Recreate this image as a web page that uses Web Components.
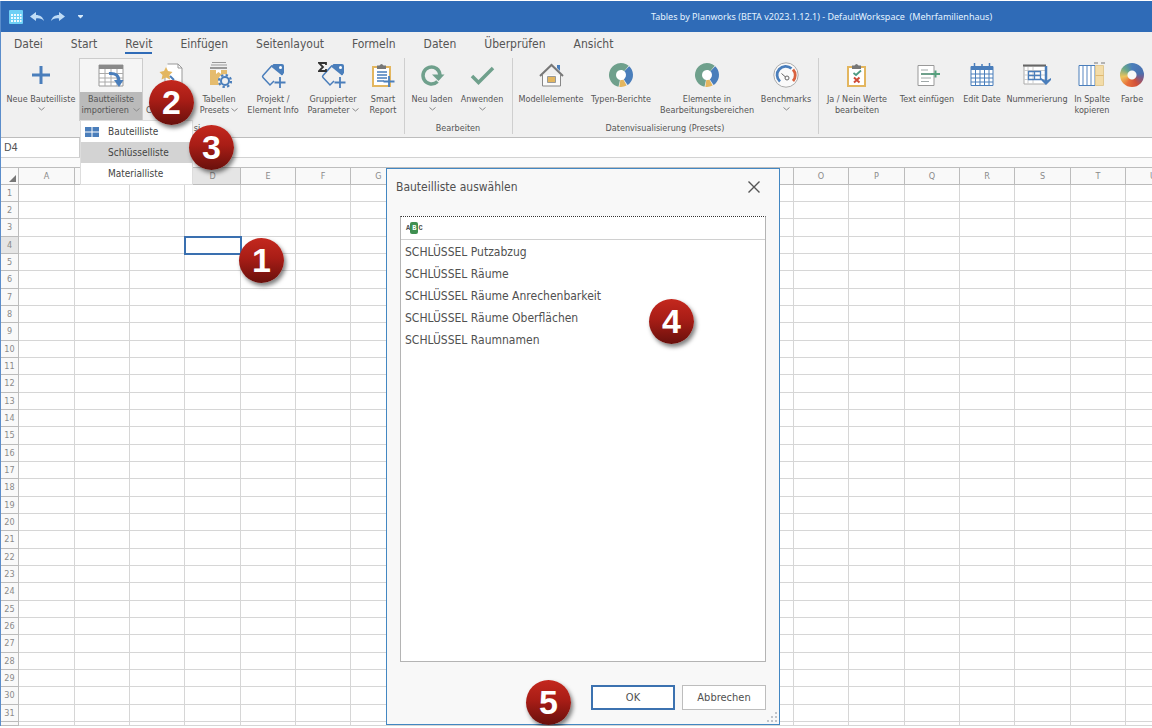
<!DOCTYPE html>
<html lang="de">
<head>
<meta charset="utf-8">
<title>Tables by Planworks</title>
<style>
  body { margin: 0; background: #fff; color: #444; font: 9px/11px "DejaVu Sans Condensed", "DejaVu Sans", sans-serif; overflow: hidden; }
</style>
</head>
<body>
<planworks-app></planworks-app>

<template id="t-app">
  <style>
    :host { display: block; position: relative; padding-top: 1px; }
    .window { border-left: 1px solid #5b8dcb; background: #fff; overflow: hidden; }
    tool-ribbon { position: relative; }
  </style>
  <div class="window">
    <title-bar>Tables by Planworks (BETA v2023.1.12.1) - DefaultWorkspace&nbsp; (Mehrfamilienhaus)</title-bar>
    <tab-strip></tab-strip>
    <tool-ribbon></tool-ribbon>
    <formula-bar></formula-bar>
    <sheet-grid></sheet-grid>
  </div>
  <pick-dialog heading="Bauteilliste auswählen">
    <li role="option">SCHLÜSSEL Putzabzug</li>
    <li role="option">SCHLÜSSEL Räume</li>
    <li role="option">SCHLÜSSEL Räume Anrechenbarkeit</li>
    <li role="option">SCHLÜSSEL Räume Oberflächen</li>
    <li role="option">SCHLÜSSEL Raumnamen</li>
  </pick-dialog>
  <step-badge style="left:239px;top:238px">1</step-badge>
  <step-badge style="left:149px;top:80px">2</step-badge>
  <step-badge style="left:189px;top:125px">3</step-badge>
  <step-badge style="left:649px;top:299px">4</step-badge>
  <step-badge style="left:526px;top:680px">5</step-badge>
</template>

<template id="t-title">
  <style>
    :host { display: grid; grid-template-columns: 1fr auto 1fr; align-items: center; height: 31px; background: #2f6bb7; color: #e4f3ff; font-family: "Noto Sans", sans-serif; }
    .quick { display: flex; align-items: center; padding-left: 8px; }
    button { all: unset; display: flex; margin-right: 7px; }
    h1 { margin: 0; font: inherit; padding-left: 490px; }
  </style>
  <div class="quick">
    <button aria-label="Tabelle"><svg width="14" height="14" viewBox="0 0 14 14"><rect width="14" height="14" rx="1" fill="#6ed0f5"/><path d="M2 4h2v2H2zM5 4h2v2H5zM8 4h2v2H8zM11 4h1.500v2H11zM2 7h2v2H2zM5 7h2v2H5zM8 7h2v2H8zM11 7h1.500v2H11zM2 10h2v2H2zM5 10h2v2H5zM8 10h2v2H8zM11 10h1.500v2H11z" fill="#eefaff"/></svg></button>
    <button aria-label="Rückgängig"><svg width="14" height="10" viewBox="0 0 14 10"><path d="M0 4.500 6 0v3c4 0 7 2 8 6-2-2-4-3-8-2.500V9z" fill="#bfdcf6"/></svg></button>
    <button aria-label="Wiederholen"><svg width="14" height="10" viewBox="0 0 14 10"><path d="M14 4.500 8 0v3C4 3 1 5 0 9c2-2 4-3 8-2.500V9z" fill="#bfdcf6"/></svg></button>
    <button aria-label="Mehr" style="margin-left:6px"><svg width="5" height="4" viewBox="0 0 5 4"><path d="M0 0h5v1L2.500 3.500 0 1z" fill="#d5e9fa"/></svg></button>
  </div>
  <h1><slot></slot></h1>
</template>

<template id="t-tabs">
  <style>
    :host { display: flex; gap: 28px; padding-left: 13px; height: 25px; background: #f0f0f0; align-items: flex-start; font-size: 12px; line-height: 16px; }
    a { color: #555; text-decoration: none; padding-top: 4px; border-bottom: 2px solid transparent; }
    a[aria-current] { border-color: #2f6bb7; }
  </style>
  <a href="#datei">Datei</a><a href="#start">Start</a><a href="#revit" aria-current="page">Revit</a><a href="#einfuegen">Einfügen</a><a href="#layout">Seitenlayout</a><a href="#formeln">Formeln</a><a href="#daten">Daten</a><a href="#pruefen">Überprüfen</a><a href="#ansicht">Ansicht</a>
</template>

<template id="t-ribbon">
  <style>
    :host { display: flex; height: 80px; padding: 0 0 0 2px; background: #f0f0f0; border-bottom: 1px solid #bdbdbd; }
    .w40 { width: 40px; } .w48 { width: 48px; } .w52 { width: 52px; } .w60 { width: 60px; } .w64 { width: 64px; }
    .w70 { width: 70px; } .w76 { width: 76px; } .w102 { width: 102px; } .w56 { width: 56px; }
    .partial { padding-right: 12px; }
  </style>
  <ribbon-group>
    <ribbon-button class="w76" icon="plus" drop>Neue Bauteilliste</ribbon-button>
    <ribbon-button class="w64" icon="import" drop active>Bautteiliste<br>importieren
      <drop-menu slot="menu"></drop-menu>
    </ribbon-button>
    <ribbon-button class="w52" icon="wand" edge><br>C</ribbon-button>
    <ribbon-button class="w48" icon="presets" drop>Tabellen<br>Presets</ribbon-button>
    <ribbon-button class="w60" icon="tag">Projekt /<br>Element Info</ribbon-button>
    <ribbon-button class="w60" icon="sumtag" drop>Gruppierter<br>Parameter</ribbon-button>
    <ribbon-button class="w40" icon="report">Smart<br>Report</ribbon-button>
    <span slot="label" class="partial">si</span>
  </ribbon-group>
  <ribbon-group>
    <ribbon-button class="w48" icon="reload" drop>Neu laden</ribbon-button>
    <ribbon-button class="w52" icon="check" drop>Anwenden</ribbon-button>
    <span slot="label">Bearbeiten</span>
  </ribbon-group>
  <ribbon-group>
    <ribbon-button class="w70" icon="house">Modellelemente</ribbon-button>
    <ribbon-button class="w70" icon="donut">Typen-Berichte</ribbon-button>
    <ribbon-button class="w102" icon="donut">Elemente in<br>Bearbeitungsbereichen</ribbon-button>
    <ribbon-button class="w56" icon="gauge" drop>Benchmarks</ribbon-button>
    <span slot="label">Datenvisualisierung (Presets)</span>
  </ribbon-group>
  <ribbon-group last>
    <ribbon-button class="w70" icon="yesno">Ja / Nein Werte<br>bearbeiten</ribbon-button>
    <ribbon-button class="w70" icon="text">Text einfügen</ribbon-button>
    <ribbon-button class="w40" icon="date">Edit Date</ribbon-button>
    <ribbon-button class="w70" icon="number">Nummerierung</ribbon-button>
    <ribbon-button class="w40" icon="split">In Spalte<br>kopieren</ribbon-button>
    <ribbon-button class="w40" icon="color">Farbe</ribbon-button>
  </ribbon-group>
</template>

<template id="t-group">
  <style>
    :host { display: flex; flex: none; flex-direction: column; justify-content: space-between; padding: 0 4px 0 3px; margin: 1px 0 3px; border-right: 1px solid #cfcfcf; }
    :host(:first-of-type) { padding: 0 1px 0 0; }
    :host([last]) { border: 0; }
    .row { display: flex; }
    .label { text-align: center; color: #555; }
  </style>
  <div class="row"><slot></slot></div>
  <div class="label"><slot name="label"></slot></div>
</template>

<template id="t-rbutton">
  <style>
    :host { display: block; flex: none; position: relative; }
    button { all: unset; box-sizing: border-box; display: block; width: 100%; height: 63px; text-align: center; white-space: nowrap; color: #555; }
    .pic { display: flex; height: 34px; align-items: center; justify-content: center; }
    .cap { display: flow-root; padding-top: 2px; height: 27px; }
    .chev { vertical-align: 1px; margin-left: 2px; }
    .below { display: block; margin: 2px auto 0; }
    :host([active]) button { border: 1px solid #ccc; border-bottom: 0; }
    :host([active]) .pic { height: 33px; background: #f5f5f5; }
    :host([active]) .cap { background: #bababa; }
    :host([edge]) button { text-align: left; padding-left: 3px; }
  </style>
  <button><span class="pic"></span><span class="cap"><slot></slot></span></button>
  <slot name="menu"></slot>
</template>

<template id="t-menu">
  <style>
    :host { display: block; position: absolute; z-index: 5; left: 1px; top: 62px; width: 113px; background: #fff; border: 1px solid #ddd; box-sizing: border-box; font-size: 10px; line-height: 21px; }
    button { all: unset; display: grid; grid-template-columns: 27px 1fr; align-items: center; width: 100%; height: 21px; color: #444; }
    button.hot { background: #d3d3d3; }
    svg { margin-left: 4px; }
  </style>
  <button><svg width="14" height="10" viewBox="0 0 14 10"><path d="M0 0h6.500v4.500H0zM7.500 0H14v4.500H7.500zM0 5.500h6.500V10H0zM7.500 5.500H14V10H7.500z" fill="#4a7ebb"/></svg><span>Bauteilliste</span></button>
  <button class="hot"><i></i><span>Schlüsselliste</span></button>
  <button><i></i><span>Materialliste</span></button>
</template>

<template id="t-formula">
  <style>
    :host { display: flex; height: 19px; border-bottom: 1px solid #d2d2d2; }
    input { all: unset; box-sizing: border-box; font-size: 11px; color: #555; padding-left: 3px; }
    .name { width: 79px; border-right: 1px solid #ccc; }
    .fx { flex: 1; }
  </style>
  <input class="name" aria-label="Zelle" value="D4"><input class="fx" aria-label="Formel">
</template>

<template id="t-sheet">
  <style>
    :host { display: block; padding-top: 9px; background: #fafafa; overflow: hidden; color: #8a8a8a; }
    table { border-collapse: separate; border-spacing: 0; table-layout: fixed; background: #fff; border-top: 1px solid #bdbdbd; }
    tr { height: 17px; }
    tbody tr:nth-child(3n) { height: 18px; }
    th, td { padding: 0; box-sizing: border-box; border: 0 solid #d6d6d6; border-width: 0 1px 1px 0; }
    th { font-weight: 400; background: #f9f9f9; text-align: center; border-color: #bcbcbc; }
    th.on { background: #e5e5e5; }
    td.on { outline: 2px solid #3a70b0; outline-offset: -1px; }
    tbody tr.rest { height: 4px; line-height: 0; }
    thead th:first-child svg { display: block; margin: 5px 0 0 8px; }
  </style>
  <table></table>
</template>

<template id="t-dialog">
  <style>
    :host { display: flex; flex-direction: column; position: absolute; z-index: 6; left: 386px; top: 168px; width: 394px; box-sizing: border-box; padding: 0 13px; background: #f8f8f8; border: 1px solid #4387c2; font-size: 12px; line-height: 22px; color: #505050; }
    header { display: flex; justify-content: space-between; align-items: center; height: 35px; margin-left: -4px; }
    h2 { margin: 0; font: inherit; }
    button { all: unset; box-sizing: border-box; }
    .close { display: flex; margin-right: 6px; }
    .box { margin-top: 12px; height: 446px; box-sizing: border-box; background: #fff; border: 1px solid #b4b4b4; border-top: 1px dotted #333; }
    .filter { display: flex; align-items: center; height: 22px; border-bottom: 1px solid #d0d0d0; font: 700 7px/10px "Liberation Mono", monospace; padding-left: 5px; }
    .filter b { background: #3f8f50; color: #fff; padding: 0 2px; border-radius: 2px; line-height: 12px; }
    .filter input { all: unset; flex: 1; }
    ul { margin: 0; padding: 1px 4px; list-style: none; }
    ::slotted(li) { height: 22px; list-style: none; }
    footer { display: flex; justify-content: flex-end; gap: 7px; margin: 23px 0 14px; font-size: 11px; }
    footer button { width: 84px; height: 25px; text-align: center; background: #fff; border: 1px solid #bdbdbd; }
    footer button.main { border: 2px solid #3c72b0; line-height: 21px; }
    .grip { position: absolute; right: 1px; bottom: 1px; }
  </style>
  <header><h2></h2><button class="close" aria-label="Schließen"><svg width="12" height="12" viewBox="0 0 12 12"><path d="M.5.5l11 11M11.500.5l-11 11" stroke="#555" stroke-width="1.400"/></svg></button></header>
  <div class="box">
    <label class="filter"><span>A</span><b>B</b><span>C</span><input aria-label="Filter"></label>
    <ul role="listbox"><slot></slot></ul>
  </div>
  <footer><button class="main">OK</button><button>Abbrechen</button></footer>
  <svg class="grip" width="11" height="11" viewBox="0 0 11 11"><path d="M8 0h2v2H8zM8 4h2v2H8zM8 8h2v2H8zM4 4h2v2H4zM4 8h2v2H4zM0 8h2v2H0z" fill="#c0c4ca"/></svg>
</template>

<template id="t-badge">
  <style>
    :host { display: flex; position: absolute; z-index: 7; width: 45px; height: 45px; border-radius: 50%; align-items: center; justify-content: center; background: linear-gradient(#c4281e, #a81d16 45%, #68100c); box-shadow: 2px 3px 4px rgba(0,0,0,.5); color: #fff; font: 700 34px/45px "Liberation Sans", Arial, sans-serif; }
  </style>
  <slot></slot>
</template>

<script>
const B = '#4a7ebb', G = '#6fa08c', Y = '#e3b65f', D = '#666';
const svg = (body, w = 26) => `<svg width="${w}" height="26" viewBox="0 0 ${w} 26" fill="none">${body}</svg>`;
const tag = `<path d="M12 3.500 3 13.500a1.500 1.500 0 0 0 0 2l7 7.500 4-4M22 10v3" stroke="${B}" stroke-width="1.500"/><path d="M12 3.500 13.500 2H22q2 0 2 2v7l-2 2.500L11.500 5z" fill="${B}"/><circle cx="20.500" cy="5.500" r="1.500" fill="#fff"/><path d="M20 15v11M14.500 20.500h11" stroke="${B}" stroke-width="1.800"/>`;
const arc = (start, len, color) => `<circle cx="13" cy="13" r="8.500" pathLength="360" stroke="${color}" stroke-width="7" stroke-dasharray="${len} ${360 - len}" transform="rotate(${start - 90} 13 13)"/>`;
const donut = `<circle cx="13" cy="13" r="6" fill="#fff"/>` + arc(192, 208, G) + arc(43, 104, B) + arc(152, 36, Y);
const clip = (x, c) => `<path d="M${x + 1} 5h17v19h-17z" stroke="${Y}" stroke-width="2" fill="${c}"/><path d="M${x + 5} 3.500h2.500q2-3 4 0H${x + 14}V7h-9z" fill="#777"/>`;
const ICONS = {
  plus: svg(`<path d="M13 4v18M4 13h18" stroke="${B}" stroke-width="3"/>`),
  import: svg(`<path d="M1 2h24v21H1z" fill="#fff" stroke="#999"/><path d="M1 2h24v4H1z" fill="#8a8a8a"/><path d="M1 10.500h24M1 15h24M1 19h24M7 6v17M13 6v17M19 6v17" stroke="#aaa"/><path d="M11 10.500q10-1 10 8" stroke="${B}" stroke-width="3"/><path d="M16 17h9.500L21 24z" fill="${B}"/>`),
  wand: svg(`<path d="M9.500 2H20l4 4v18H7V13" stroke="#999" fill="#fff"/><path d="M20 2v4h4" stroke="#999"/><path d="m8 5 2 4 4.500 1-3 3 .5 4.500-4-2-4.500 2 1-4.500-3-3 4.500-1z" fill="${Y}"/><path d="m12 14 4 4" stroke="${B}" stroke-width="2"/>`),
  presets: svg(`<path d="M6 .5h14M5 3h16" stroke="#999"/><path d="M4 5h17v2H4z" fill="#999"/><path d="M4 8h17v15H4z" fill="${Y}" opacity=".9"/><path d="M10 8h5v4l-2.500-2L10 12z" fill="#fff"/><circle cx="19" cy="19" r="7" fill="#f0f0f0"/><circle cx="19" cy="19" r="4" stroke="${B}" stroke-width="2"/><circle cx="19" cy="19" r="6" stroke="${B}" stroke-width="2.200" stroke-dasharray="2.350 2.350"/>`),
  tag: svg(tag),
  sumtag: svg(`<g transform="translate(2 0)">${tag}</g><path d="M8 3V1H1l4 4-4 4h7V7" stroke="#333" stroke-width="1.800"/>`, 30),
  report: svg(clip(2, '#fff') + `<path d="M7 10h10M7 13h10M7 16h10M7 19h7" stroke="${B}" stroke-width="1.300"/><path d="M19 14v11M13.500 19.500h11" stroke="${B}" stroke-width="1.800"/>`),
  reload: svg(`<path d="M18.500 19.500A8.500 8.500 0 1 1 21 13" stroke="${G}" stroke-width="3.500"/><path d="M13 12.500h12.500L19.500 19z" fill="${G}"/>`),
  check: svg(`<path d="m3 14 6.500 6.500L24 6" stroke="${G}" stroke-width="3.500"/>`),
  house: svg(`<path d="M19 3h3v6l-3-3z" fill="${B}"/><path d="M4.500 13v11h18V13" stroke="#888" fill="#fafafa"/><path d="M2 14 13.500 3 25 14" stroke="#777" stroke-width="2" fill="none"/><path d="M9.500 14.500h8v6h-8z" fill="${Y}" stroke="#999"/>`),
  donut: svg(donut),
  gauge: svg(`<circle cx="13" cy="13" r="12.200" stroke="#aaa" fill="#fafafa"/><path d="M7 19.500A8.500 8.500 0 0 1 18.500 6.500" stroke="${B}" stroke-width="2.800"/><path d="M20 7.500a8.500 8.500 0 0 1 0 11.500" stroke="#d9623f" stroke-width="2.800"/><circle cx="14" cy="16" r="2" stroke="${D}"/><path d="M8.500 11.500l4 3.500" stroke="${D}"/>`),
  yesno: svg(clip(3, '#fff') + `<path d="m9.500 11 2.500 2 5-4.500" stroke="#4d9a82" stroke-width="1.800"/><path d="m10 15.500 5.500 5M15.500 15.500l-5.500 5" stroke="#cf4a35" stroke-width="2"/>`),
  text: svg(`<path d="M4 3.500h16v20H4z" stroke="#999" fill="#fff"/><path d="M7 8h7M7 16h10M7 19.500h8" stroke="#a0a8a8"/><path d="M7 12h11" stroke="${G}" stroke-width="2"/><path d="M21.500 8.500v7M17 12h9" stroke="#56a07e" stroke-width="2"/>`),
  date: svg(`<path d="M2 4.500h22v19H2z" stroke="${B}" fill="#fff"/><path d="M2 4h22v4H2z" fill="${B}"/><path d="M5.500 1v5M20.500 1v5M13 2v3" stroke="${B}" stroke-width="1.500"/><path d="M2 12h22M2 16h22M2 20h22M6.500 8v15M11 8v15M15.500 8v15M20 8v15" stroke="${B}"/>`),
  number: svg(`<path d="M1 4h22v18H1z" stroke="#aaa" fill="#fff"/><path d="M0 3.500h23" stroke="#666" stroke-width="2"/><path d="M1 8.500h22M1 13h22M1 17.500h22M5 5v17M10 5v17" stroke="#ccc"/><path d="M5.500 9.500h12v8h-12zM5 13.500h13M11.500 9v9" stroke="${B}" stroke-width="1.300"/><path d="M23 4v15" stroke="${B}" stroke-width="2.500"/><path d="M18 16l5 3 5-3v2l-5 5-5-5z" fill="${B}"/>`, 28),
  split: svg(`<path d="M1 3.500h16v20H1z" fill="#fff" stroke="${B}"/><path d="M5 4v19M9 4v19M13 4v19" stroke="#7fa3cf" stroke-width="1.300"/><path d="M17.500 3.500h8v20h-8z" fill="#f3dca8" stroke="#e0c892"/><path d="M17.500 13.500h8" stroke="#e0b870"/><path d="M16 1h4M27 1h-4" stroke="#777"/>`, 28)
};
const CHEV = cls => `<svg class="chev ${cls}" width="7" height="4" viewBox="0 0 7 4"><path d="M.5.5 3.500 3 6.500.5" fill="none" stroke="#888"/></svg>`;

const define = (name, tpl, setup) => customElements.define(name, class extends HTMLElement {
  connectedCallback() {
    if (this.shadowRoot) return;
    const root = this.attachShadow({ mode: 'open' });
    root.append(document.getElementById(tpl).content.cloneNode(true));
    if (setup) setup(this, root);
  }
});

define('title-bar', 't-title');
define('tab-strip', 't-tabs');
define('ribbon-group', 't-group');
define('drop-menu', 't-menu');
define('ribbon-button', 't-rbutton', (el, root) => {
  const icon = el.getAttribute('icon');
  const pic = root.querySelector('.pic');
  if (icon === 'color') {
    pic.innerHTML = '<span style="width:24px;height:24px;border-radius:50%;background:radial-gradient(#f8f8f8 4px,transparent 5px),conic-gradient(#4a7ebb,#4a6fae 22%,#7b5a88 30%,#d0503a 42%,#e8703a 58%,#ecc45c 72%,#6aa888 86%,#4a7ebb)"></span>';
  } else pic.innerHTML = ICONS[icon];
  if (el.hasAttribute('drop'))
    root.querySelector('.cap').insertAdjacentHTML('beforeend', CHEV(el.querySelector('br') ? '' : 'below'));
});
define('tool-ribbon', 't-ribbon');
define('formula-bar', 't-formula');
define('sheet-grid', 't-sheet', (el, root) => {
  const widths = Array.from({ length: 21 }, (_, i) => i % 3 ? 55 : 56);
  const letters = widths.map((_, i) => String.fromCharCode(65 + i));
  const table = root.querySelector('table');
  table.style.width = 18 + widths.reduce((a, b) => a + b) + 'px';
  let html = '<colgroup><col style="width:18px">' + widths.map(w => `<col style="width:${w}px">`).join('') + '</colgroup><thead><tr><th><svg width="7" height="7"><path d="M7 0v7H0z" fill="#777"/></svg></th>';
  html += letters.map(l => `<th${l === 'D' ? ' class="on"' : ''}>${l}</th>`).join('') + '</tr></thead><tbody>';
  for (let r = 1; r <= 31; r++)
    html += `<tr><th${r === 4 ? ' class="on"' : ''}>${r}</th>` + letters.map(l => r === 4 && l === 'D' ? '<td class="on"></td>' : '<td></td>').join('') + '</tr>';
  html += '<tr class="rest"><th></th>' + '<td></td>'.repeat(21) + '</tr></tbody>';
  table.innerHTML = html;
});
define('pick-dialog', 't-dialog', (el, root) => { root.querySelector('h2').textContent = el.getAttribute('heading'); });
define('step-badge', 't-badge');
define('planworks-app', 't-app');
</script>
</body>
</html>
